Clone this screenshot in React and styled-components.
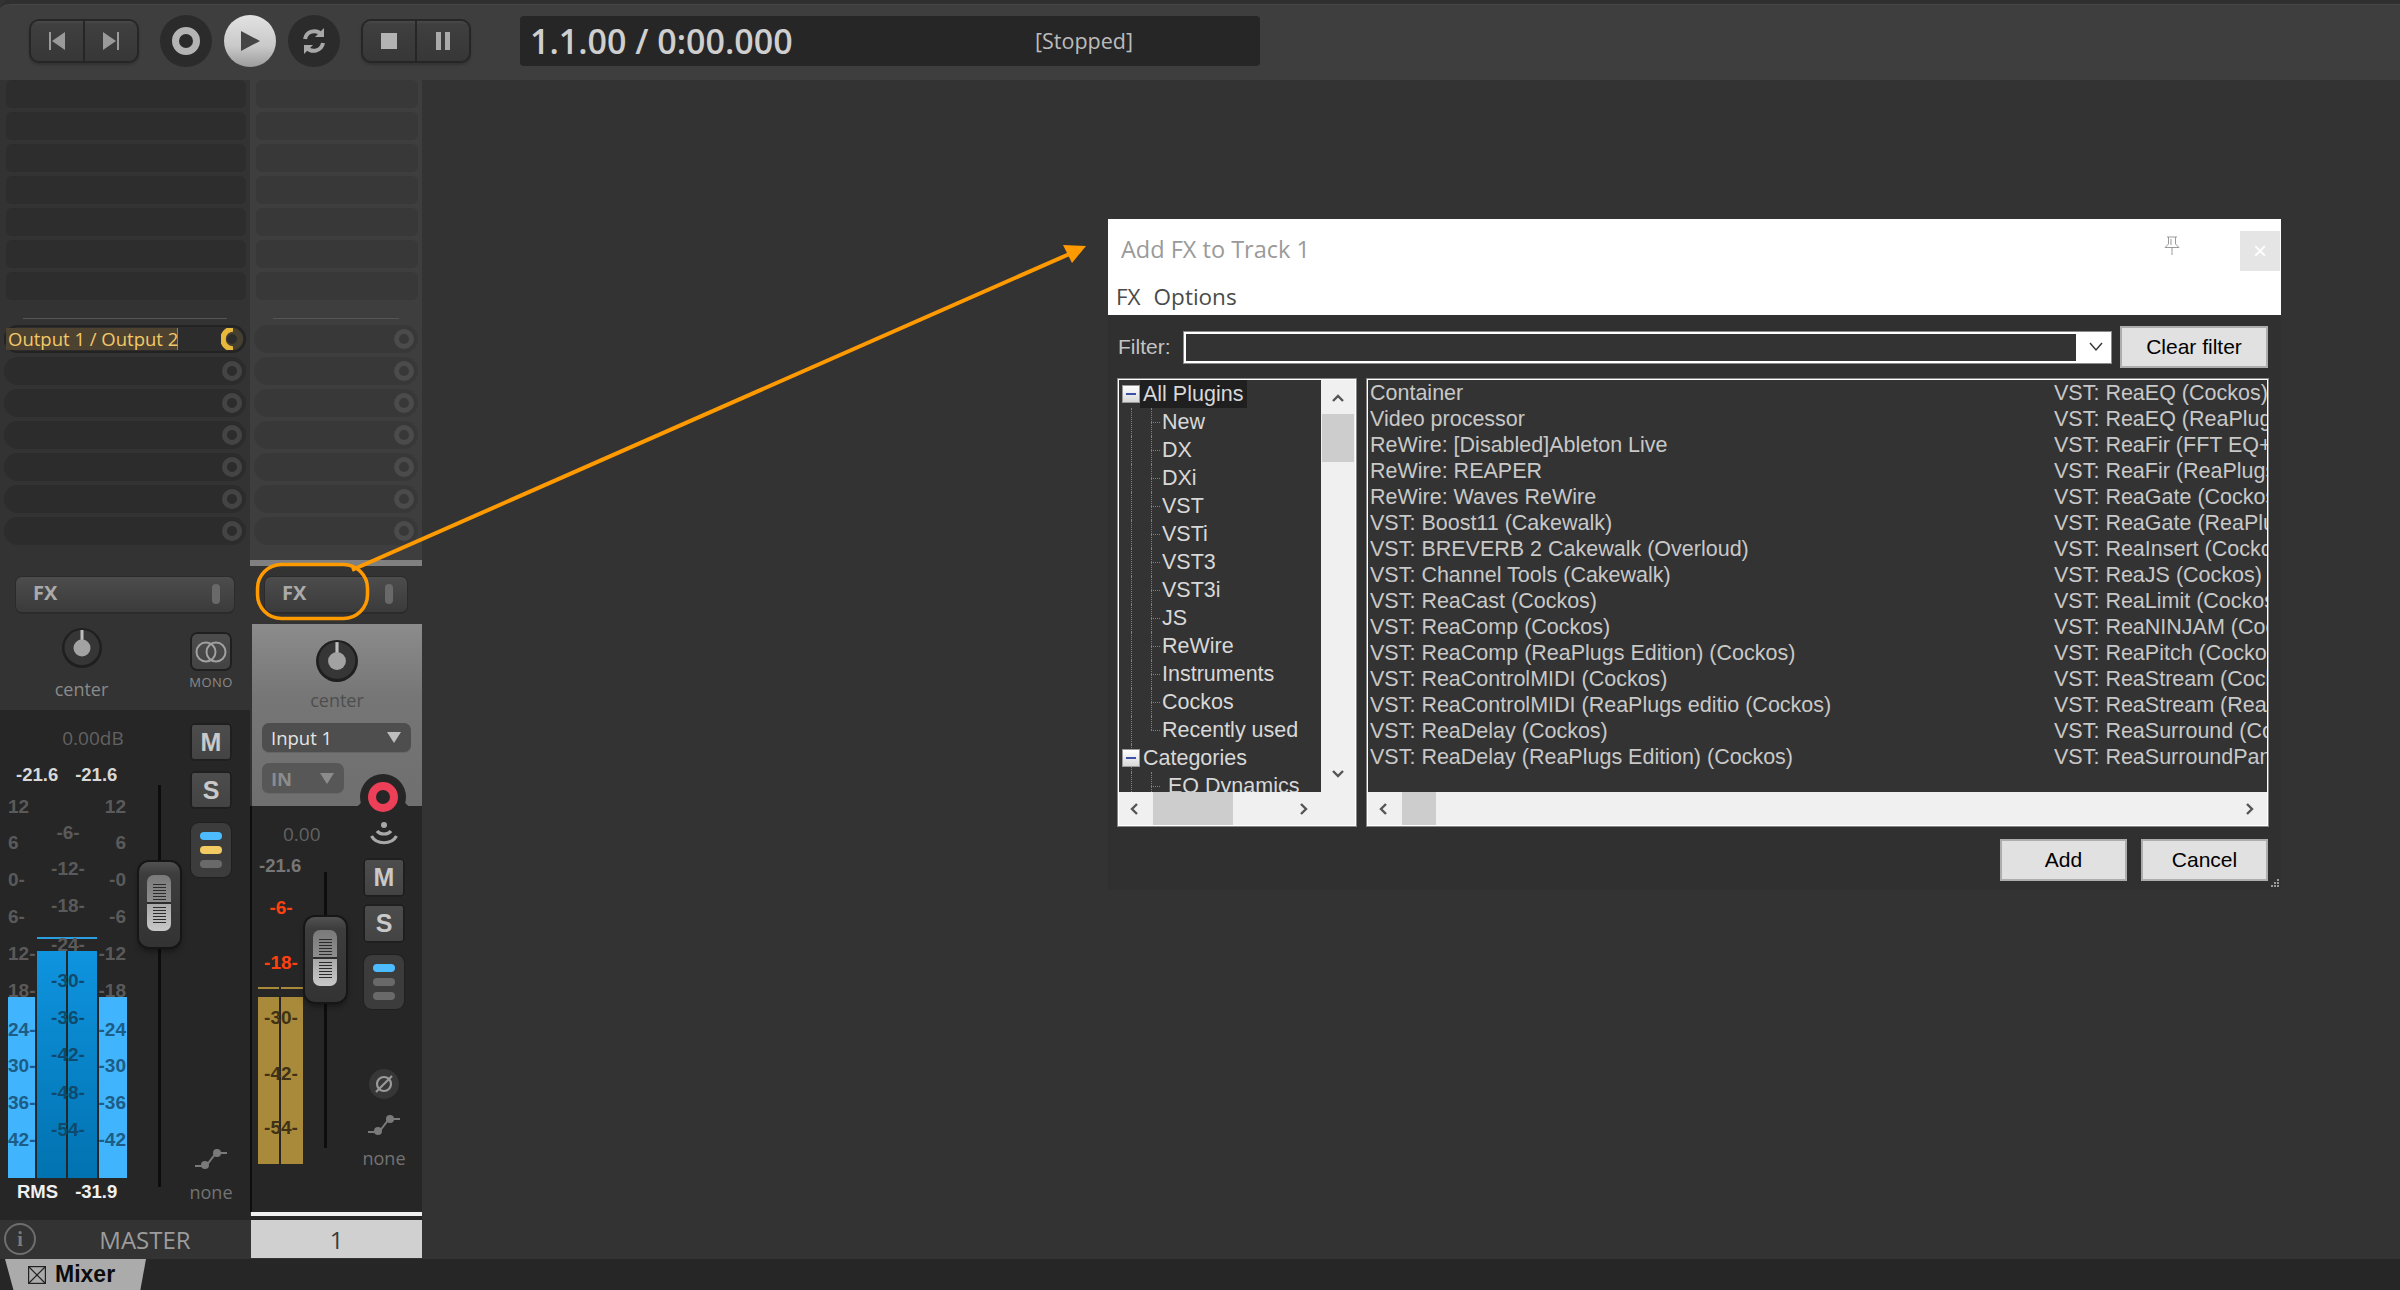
import React from "react";
import styled, { createGlobalStyle } from "styled-components";

const GlobalStyle = createGlobalStyle`
  html, body { margin: 0; padding: 0; background: #333; }
  * { box-sizing: border-box; }
`;

const UI = `"Open Sans", "Noto Sans", sans-serif`;
const ARIAL = `"Liberation Sans", Arial, sans-serif`;

const Page = styled.div`
  position: relative; width: 2400px; height: 1290px; overflow: hidden;
  display: flex; flex-direction: column; background: #333; font-family: ${UI};
`;

/* ---------- Transport ---------- */
const TopBar = styled.header`
  height: 80px; flex: none; display: flex; align-items: center; padding: 0 0 2px 29px;
  background: #3e3e3e; border-top: 4px solid #2f2f2f; border-top-left-radius: 10px;
  box-shadow: inset 0 1px 0 #464646;
`;
const BtnGroup = styled.div`
  display: flex; width: 110px; height: 44px; border-radius: 10px; background: #262626; padding: 2px; gap: 2px;
  box-shadow: 0 2px 2px #333;
`;
const GroupBtn = styled.div`
  flex: 1; display: flex; align-items: center; justify-content: center;
  background: linear-gradient(#4a4a4a 0, #3f3f3f 8%, #373737 100%);
  border-radius: ${(p) => (p.$side === "l" ? "8px 0 0 8px" : "0 8px 8px 0")};
`;
const RoundBtn = styled.div`
  width: 52px; height: 52px; border-radius: 50%; flex: none; display: flex; align-items: center; justify-content: center;
  margin-left: ${(p) => p.$ml || 12}px;
  background: ${(p) => (p.$on ? "linear-gradient(#e2e2e2, #c9c9c9 60%, #9c9c9c)" : "#2b2b2b")};
`;
const Spacer = styled.div`width: ${(p) => p.$w}px; flex: none;`;
const TimeBox = styled.div`
  width: 740px; height: 50px; margin-left: 49px; margin-top: -1px; background: #262626; border-radius: 4px;
  display: flex; align-items: center; padding-left: 10px; color: #cfcfcf;
`;
const TimeText = styled.span`font-size: 34px; font-weight: 600; width: 505px; letter-spacing: 0; white-space: nowrap;`;
const StatusText = styled.span`font-size: 21.5px; color: #bcbcbc; white-space: nowrap;`;

/* ---------- Workspace ---------- */
const Workspace = styled.div`flex: 1; display: flex; min-height: 0;`;
const Mixer = styled.div`width: 422px; flex: none; display: flex;`;
const Strip = styled.section`
  width: ${(p) => p.$w}px; flex: none; display: flex; flex-direction: column; background: #333;
`;
const SlotsArea = styled.div`
  height: 480px; flex: none; display: flex; flex-direction: column; background: ${(p) => (p.$track ? "#3e3e3e" : "#333")};
  padding: 0 4px;
`;
const Slot = styled.div`
  height: 28px; flex: none; margin: 0 0 4px 2px; border-radius: 6px;
  background: ${(p) => (p.$track ? "#383838" : "#2d2d2d")};
`;
const Sep = styled.div`height: 1px; flex: none; margin: 14px ${(p) => p.$m}px 6px; background: #555;`;
const Send = styled.div`
  height: 28px; flex: none; margin-bottom: 4px; border-radius: 14px; position: relative; display: flex; align-items: center;
  background: ${(p) => (p.$track ? "#383838" : "#2c2c2c")};
  ${(p) => p.$active && "box-shadow: 0 0 0 2px #232323 inset;"}
`;
const SendKnob = styled.div`
  position: absolute; right: 4px; top: 4px; width: 20px; height: 20px; border-radius: 50%;
  border: 5px solid ${(p) => (p.$track ? "#4b4b4b" : "#444")};
  background: ${(p) => (p.$track ? "#383838" : "#2c2c2c")};
`;
const SendFill = styled.div`
  width: 172px; height: 22px; margin-left: 2px; background: #4d4230; border-right: 1px solid #8a8270;
  font-size: 18.5px; line-height: 22px; color: #f2c968; padding-left: 2px; white-space: nowrap; overflow: visible;
`;
const ActiveKnob = styled.svg`position: absolute; right: 3px; top: 3px;`;
const GreyBar = styled.div`height: 6px; flex: none; background: ${(p) => (p.$on ? "#808080" : "transparent")};`;
const FxRow = styled.div`height: 58px; flex: none; display: flex; align-items: center; padding: ${(p) => p.$pad}; `;
const FxBtn = styled.div`
  flex: 1; height: 35px; border-radius: 6px; display: flex; align-items: center; justify-content: space-between;
  padding: 0 14px 3px 17px; margin-top: -2px; font-size: 20px; font-weight: 700; color: #aaa;
  background: linear-gradient(#4c4c4c, #3b3b3b); box-shadow: 0 0 0 1px #2b2b2b, 0 2px 0 #2b2b2b;
`;
const FxPill = styled.div`width: 8px; height: 20px; border-radius: 4px; background: #696969; margin-top: 3px;`;

const KnobWrap = styled.div`
  width: ${(p) => p.$s}px; height: ${(p) => p.$s}px; flex: none;
`;
const Caption = styled.div`
  font-size: 18px; line-height: 20px; color: ${(p) => p.$c || "#8a8a8a"}; text-align: center; white-space: nowrap;
  margin-top: ${(p) => p.$mt || 0}px;
`;
const MasterPanel = styled.div`
  height: 86px; flex: none; display: grid; grid-template-columns: 163px 87px; 
`;
const PanCol = styled.div`display: flex; flex-direction: column; align-items: center; padding-top: 4px; gap: 11px;`;
const MonoCol = styled.div`display: flex; flex-direction: column; align-items: center; padding: 8px 0 0 9px; gap: 4px;`;
const SquareBtn = styled.div`
  width: 42px; height: ${(p) => p.$h || 38}px; flex: none; border-radius: ${(p) => p.$r || 4}px; display: flex; align-items: center; justify-content: center;
  margin-top: ${(p) => p.$mt || 0}px;
  background: linear-gradient(#4d4d4d, #434343); box-shadow: inset 0 0 0 2px #1f1f1f;
  font-family: ${ARIAL}; font-weight: 700; font-size: 25px; color: #c9c9c9;
`;
const MonoLabel = styled.div`font-size: 13px; line-height: 15px; color: #8a8a8a; letter-spacing: 0.4px;`;

const TrackPanel = styled.div`
  height: 182px; flex: none; margin-left: 2px; background: linear-gradient(#8c8c8c 0, #767676 40%, #6f6f6f 100%);
  display: flex; flex-direction: column; align-items: center; padding: 16px 10px 0; position: relative;
`;
const Select = styled.div`
  width: ${(p) => p.$w}px; height: ${(p) => p.$h}px; flex: none; align-self: flex-start; border-radius: 7px; background: ${(p) => p.$bg};
  display: flex; align-items: center; justify-content: space-between; padding: 0 10px 0 9px;
  margin-top: ${(p) => p.$mt}px; font-size: 18.5px; color: ${(p) => p.$c}; font-weight: ${(p) => p.$fw || 400};
  box-shadow: 0 1px 0 #666;
`;
const Tri = styled.span`
  width: 0; height: 0; border-left: 7px solid transparent; border-right: 7px solid transparent;
  border-top: 11px solid ${(p) => p.$c};
`;
const RecHump = styled.div`
  position: absolute; left: 108px; top: 150px; width: 46px; height: 46px; border-radius: 50%; background: #262626; z-index: 2;
  display: flex; align-items: center; justify-content: center;
  &::before, &::after {
    content: ""; position: absolute; top: 25px; width: 8px; height: 8px;
  }
  &::before { left: -6px; background: radial-gradient(circle at 0 0, transparent 7.5px, #262626 8px); }
  &::after { right: -6px; background: radial-gradient(circle at 100% 0, transparent 7.5px, #262626 8px); }
`;
const RecRing = styled.div`
  width: 30px; height: 30px; border-radius: 50%; border: 8px solid #ee3f58; background: #262626;
`;

const Lower = styled.div`
  height: ${(p) => p.$h}px; flex: none; background: #262626; position: relative; display: flex;
  ${(p) => p.$track && "border-left: 2px solid #0d0d0d;"}
`;
const MeterCol = styled.div`
  width: ${(p) => p.$w}px; flex: none; margin-left: ${(p) => p.$ml}px; display: flex; flex-direction: column;
`;
const DbText = styled.div`
  height: ${(p) => p.$h}px; flex: none; font-size: ${(p) => p.$fs || 19}px; color: #626262; text-align: ${(p) => p.$a || "center"};
  line-height: ${(p) => p.$h}px; white-space: nowrap; padding-left: ${(p) => p.$pl || 0}px;
`;
const ReadRow = styled.div`
  display: flex; flex: none; height: ${(p) => p.$h}px; align-items: center; gap: 17px; padding-left: ${(p) => p.$pl}px;
  font-family: ${ARIAL}; font-weight: 700; font-size: 18.5px; color: ${(p) => p.$c}; white-space: nowrap;
`;
const MeterBox = styled.div`
  position: relative; height: ${(p) => p.$h}px; flex: none; display: flex; align-items: flex-end; gap: 2px;
`;
const Bar = styled.div`
  width: ${(p) => p.$w}px; height: ${(p) => p.$h}px; flex: none; background: ${(p) => p.$bg};
`;
const Peak = styled.div`
  position: absolute; left: ${(p) => p.$l}px; width: ${(p) => p.$w}px; top: ${(p) => p.$t}px; height: 2px; background: ${(p) => p.$c};
`;
const Scale = styled.span`
  position: absolute; top: ${(p) => p.$y}px; line-height: 20px; font-family: ${ARIAL}; font-weight: 700;
  font-size: 19px; color: ${(p) => p.$c}; white-space: nowrap;
  ${(p) => (p.$r !== undefined ? `right: ${p.$r}px;` : "")}
  ${(p) => (p.$l !== undefined ? `left: ${p.$l}px;` : "")}
  ${(p) => (p.$cx !== undefined ? `left: ${p.$cx}px; transform: translateX(-50%);` : "")}
`;
const FaderCol = styled.div`
  width: 40px; flex: none; margin-left: ${(p) => p.$ml}px; margin-top: ${(p) => p.$mt}px; height: ${(p) => p.$h}px; position: relative;
  display: flex; justify-content: center;
`;
const FaderLine = styled.div`width: 3px; height: 100%; background: #0d0d0d;`;
const FaderCap = styled.div`
  position: absolute; left: 0; top: ${(p) => p.$t}px; width: 41px; height: 85px; border-radius: 10px; padding: 13px 8px;
  background: linear-gradient(#515151, #3d3d3d 14%, #333 100%); box-shadow: 0 0 0 2px #161616, 0 4px 6px rgba(0,0,0,.45);
`;
const FaderGrip = styled.div`
  width: 24px; height: 56px; border-radius: 7px; background: linear-gradient(#7a7a7a 0, #8d8d8d 48%, #2d2d2d 48%, #2d2d2d 51%, #a9a9a9 51%, #c8c8c8 100%);
  display: flex; flex-direction: column; justify-content: center; gap: 2px; align-items: center;
`;
const Hatch = styled.div`width: 13px; height: 1px; background: #2b2b2b; margin-top: ${(p) => p.$mt || 0}px;`;
const BtnCol = styled.div`
  width: 42px; flex: none; margin-left: ${(p) => p.$ml}px; padding-top: ${(p) => p.$pt}px; padding-bottom: ${(p) => p.$pb}px; display: flex; flex-direction: column; align-items: center; gap: 10px;
`;
const LedGroup = styled.div`
  width: 40px; height: 54px; flex: none; border-radius: 8px; background: #3c3c3c; box-shadow: 0 0 0 1px #1f1f1f;
  display: flex; flex-direction: column; align-items: center; justify-content: center; gap: 6px; margin-top: ${(p) => p.$mt}px;
`;
const Led = styled.div`width: 22px; height: 8px; border-radius: 4px; background: ${(p) => p.$c};`;
const PushDown = styled.div`margin-top: auto; margin-bottom: -3px;`;
const PhaseBtn = styled.div`
  width: 30px; height: 30px; border-radius: 50%; background: #373737; display: flex; align-items: center; justify-content: center; margin-top: 50px;
`;
const NameBar = styled.div`
  height: 38px; flex: none; position: relative; display: flex; align-items: center; justify-content: center;
  padding-left: ${(p) => (p.$sel ? 0 : 40)}px;
  font-size: 24px; font-weight: 400; background: ${(p) => (p.$sel ? "#d0d0d0" : "#333")};
  color: ${(p) => (p.$sel ? "#3a3a3a" : "#9c9c9c")}; ${(p) => p.$sel && "margin-left: 1px;"}
`;
const WhiteLine = styled.div`height: 4px; flex: none; background: #f0f0f0; margin-left: 1px;`;
const DarkGap = styled.div`height: ${(p) => p.$h}px; flex: none; background: #262626;`;
const InfoIcon = styled.div`
  position: absolute; left: 4px; top: 3px; width: 32px; height: 32px; border-radius: 50%; border: 2px solid #6e6e6e;
  display: flex; align-items: center; justify-content: center; font-family: "Liberation Serif", serif; font-weight: 700; font-size: 20px; color: #7c7c7c;
`;

/* ---------- Canvas and FX dialog ---------- */
const Canvas = styled.div`flex: 1; padding: 139px 0 0 686px;`;
const Dialog = styled.div`
  width: 1173px; height: 671px; background: #303030; position: relative; display: flex; flex-direction: column;
`;
const DialogHead = styled.div`height: 96px; flex: none; background: #fff; position: relative;`;
const TitleRow = styled.div`
  height: 59px; display: flex; align-items: center; padding-left: 13px; font-size: 23.5px; color: #9a9a9a; white-space: nowrap;
`;
const MenuRow = styled.div`
  display: flex; gap: 13px; padding-left: 8px; font-size: 22.5px; color: #4a4a4a; line-height: 37px;
`;
const PinBox = styled.div`position: absolute; left: 1056px; top: 17px; line-height: 0;`;
const CloseBox = styled.div`
  position: absolute; right: 1px; top: 12px; width: 40px; height: 40px; background: #e5e5e5; color: #fff; font-size: 24px;
  display: flex; align-items: center; justify-content: center; font-family: ${ARIAL};
`;
const FilterRow = styled.div`
  display: flex; align-items: center; height: 42px; margin-top: 11px; padding-left: 10px; font-family: ${ARIAL}; font-size: 21px; color: #c4c4c4;
`;
const FilterLabel = styled.span`width: 65px; flex: none;`;
const FilterInput = styled.div`
  width: 929px; height: 33px; flex: none; background: #fff; border: 1px solid #8a8a8a; padding: 2px 0 2px 2px; display: flex;
`;
const FilterInner = styled.div`flex: 1; background: #333;`;
const Chevron = styled.div`width: 35px; padding-left: 4px; display: flex; align-items: center; justify-content: center;`;
const WinBtn = styled.div`
  height: 42px; width: ${(p) => p.$w}px; flex: none; margin-left: ${(p) => p.$ml}px; background: #e1e1e1; border: 2px solid #adadad;
  display: flex; align-items: center; justify-content: center; color: #000; font-family: ${ARIAL}; font-size: 21px;
`;
const Panels = styled.div`display: flex; margin: 10px 0 0 9px; height: 449px; gap: 9px;`;
const PanelFrame = styled.div`
  width: ${(p) => p.$w}px; height: 449px; flex: none; border: 1px solid #858585; background: #fff; padding: 1px;
  display: grid; grid-template-rows: 412px 33px; grid-template-columns: ${(p) => p.$cols}; font-family: ${ARIAL}; font-size: 21.5px; color: #c8c8c8;
`;
const TreeView = styled.div`background: #333; overflow: hidden; position: relative;`;
const TreeRow = styled.div`
  height: 28px; line-height: 28px; white-space: nowrap; position: relative; padding-left: ${(p) => p.$pl}px;
`;
const TreeLabel = styled.span`
  display: inline-block; padding: 0 4px 0 3px; margin-left: -3px; color: #d8d8d8; background: ${(p) => (p.$sel ? "#1f1f1f" : "transparent")};
`;
const Expander = styled.span`
  position: absolute; left: 3px; top: 5px; width: 18px; height: 18px; background: linear-gradient(#fff, #d9d9d9); border: 1px solid #999;
  display: flex; align-items: center; justify-content: center;
  &::after { content: ""; width: 10px; height: 2px; background: #3c50a8; }
`;
const Dot = styled.span`
  position: absolute; top: 0; bottom: ${(p) => (p.$half ? "14px" : "0")}; left: ${(p) => p.$l}px; width: 0; border-left: 1px dotted #808080;
`;
const Stub = styled.span`position: absolute; top: 14px; left: 32px; width: 9px; height: 0; border-top: 1px dotted #808080;`;
const VScroll = styled.div`
  background: #f0f0f0; display: flex; flex-direction: column; align-items: center; justify-content: space-between;
  padding: 3px 0 33px; position: relative; grid-row: 1 / span 2; grid-column: 2;
`;
const VThumb = styled.div`position: absolute; top: 34px; left: 1px; right: 1px; height: 48px; background: #cdcdcd;`;
const ArrowBox = styled.div`height: 34px; display: flex; align-items: center; justify-content: center; line-height: 0; flex: none; width: ${(p) => p.$w || 34}px;`;
const HScroll = styled.div`background: #f0f0f0; display: flex; align-items: center;`;
const HThumb = styled.div`width: ${(p) => p.$w}px; height: 33px; background: #cdcdcd; flex: none;`;
const Grow = styled.div`flex: 1;`;
const ListView = styled.div`
  background: #333; overflow: hidden; display: grid; grid-template-columns: 684px 1fr; padding-left: 2px; align-content: start;
`;
const ListCell = styled.div`height: 26px; line-height: 26px; white-space: nowrap; overflow: hidden;`;
const ActionRow = styled.div`display: flex; justify-content: flex-end; padding-right: 13px; margin-top: 12px;`;
const Grip = styled.div`position: absolute; right: 1px; bottom: 2px; line-height: 0;`;

const Overlay = styled.svg`position: absolute; left: 0; top: 0; pointer-events: none; z-index: 5;`;

/* ---------- Tab bar ---------- */
const TabBar = styled.footer`height: 31px; flex: none; background: #262626; padding-left: 5px; display: flex;`;
const MixerTab = styled.div`
  width: 141px; height: 31px; background: #ababab; clip-path: polygon(0 0, 100% 0, 96% 100%, 6% 100%);
  display: flex; align-items: center; padding-left: 23px; gap: 9px; font-family: ${ARIAL}; font-weight: 700; font-size: 23px; color: #0c0c0c;
`;
const CloseCheck = styled.svg`flex: none;`;

/* ---------- Drawings ---------- */
const Knob = ({ size = 40 }) => (
  <KnobWrap $s={size}>
    <svg width={size} height={size} viewBox="0 0 40 40">
      <circle cx="20" cy="20" r="20" fill="#1f1f1f" />
      <circle cx="20" cy="19.5" r="17.5" fill="#363636" />
      <rect x="18.5" y="2" width="3" height="14" fill="#bdbdbd" />
      <circle cx="20" cy="20" r="8.5" fill="#a2a2a2" />
    </svg>
  </KnobWrap>
);
const Automation = () => (
  <svg width="34" height="22" viewBox="0 0 34 22">
    <path d="M1 18h11l10-13h11" fill="none" stroke="#7a7a7a" strokeWidth="2" />
    <circle cx="11" cy="17" r="4" fill="#7a7a7a" />
    <circle cx="23" cy="5" r="4" fill="#7a7a7a" />
  </svg>
);
const Fader = ({ t, ml, mt, h }) => (
  <FaderCol $ml={ml} $mt={mt} $h={h}>
    <FaderLine />
    <FaderCap $t={t}>
      <FaderGrip>
        {[0, 1, 2, 3, 4, 5, 6, 7, 8, 9, 10, 11].map((i) => <Hatch key={i} $mt={i === 6 ? 5 : 0} />)}
      </FaderGrip>
    </FaderCap>
  </FaderCol>
);
const Chev = ({ d, c = "#555" }) => {
  const paths = { u: "M2 8l5-5 5 5", dn: "M2 3l5 5 5-5", l: "M8 2L3 7l5 5", r: "M4 2l5 5-5 5" };
  return <svg width="14" height="14" viewBox="0 0 14 14"><path d={paths[d]} fill="none" stroke={c} strokeWidth="2.4" /></svg>;
};

const TREE = ["New", "DX", "DXi", "VST", "VSTi", "VST3", "VST3i", "JS", "ReWire", "Instruments", "Cockos", "Recently used"];
const LEFT = [
  "Container", "Video processor", "ReWire: [Disabled]Ableton Live", "ReWire: REAPER", "ReWire: Waves ReWire",
  "VST: Boost11 (Cakewalk)", "VST: BREVERB 2 Cakewalk (Overloud)", "VST: Channel Tools (Cakewalk)", "VST: ReaCast (Cockos)",
  "VST: ReaComp (Cockos)", "VST: ReaComp (ReaPlugs Edition) (Cockos)", "VST: ReaControlMIDI (Cockos)",
  "VST: ReaControlMIDI (ReaPlugs editio (Cockos)", "VST: ReaDelay (Cockos)", "VST: ReaDelay (ReaPlugs Edition) (Cockos)",
];
const RIGHT = [
  "VST: ReaEQ (Cockos)", "VST: ReaEQ (ReaPlugs Edition)", "VST: ReaFir (FFT EQ+Dynamics)", "VST: ReaFir (ReaPlugs Edition)",
  "VST: ReaGate (Cockos)", "VST: ReaGate (ReaPlugs Edition)", "VST: ReaInsert (Cockos)", "VST: ReaJS (Cockos)", "VST: ReaLimit (Cockos)",
  "VST: ReaNINJAM (Cockos)", "VST: ReaPitch (Cockos)", "VST: ReaStream (Cockos)", "VST: ReaStream (ReaPlugs)", "VST: ReaSurround (Cockos)", "VST: ReaSurroundPan (Cockos)",
];
const MASTER_L = [["12", 13], ["6", 49], ["0-", 86], ["6-", 123], ["12-", 160], ["18-", 197], ["24-", 236], ["30-", 272], ["36-", 309], ["42-", 346]];
const MASTER_R = [["12", 13], ["6", 49], ["-0", 86], ["-6", 123], ["-12", 160], ["-18", 197], ["-24", 236], ["-30", 272], ["-36", 309], ["-42", 346]];
const MASTER_C = [["-6-", 39], ["-12-", 75], ["-18-", 112], ["-24-", 151], ["-30-", 187], ["-36-", 224], ["-42-", 261], ["-48-", 299], ["-54-", 336]];

function SendKnobActive() {
  return (
    <ActiveKnob width="22" height="22" viewBox="0 0 22 22">
      <circle cx="11" cy="11" r="8" fill="none" stroke="#45402f" strokeWidth="6" />
      <path d="M12 1a10 10 0 0 0 0 20" fill="none" stroke="#e8b83c" strokeWidth="5.5" />
    </ActiveKnob>
  );
}

export default function App() {
  return (
    <Page>
      <GlobalStyle />
      <TopBar>
        <BtnGroup>
          <GroupBtn $side="l">
            <svg width="18" height="20" viewBox="0 0 18 20"><path d="M2 1v18" stroke="#9a9a9a" strokeWidth="2" /><path d="M17 1v18L4 10z" fill="#9a9a9a" /></svg>
          </GroupBtn>
          <GroupBtn $side="r">
            <svg width="18" height="20" viewBox="0 0 18 20"><path d="M16 1v18" stroke="#9a9a9a" strokeWidth="2" /><path d="M1 1v18l13-9z" fill="#9a9a9a" /></svg>
          </GroupBtn>
        </BtnGroup>
        <RoundBtn $ml={21}>
          <svg width="30" height="30" viewBox="0 0 30 30"><circle cx="15" cy="15" r="10.5" fill="none" stroke="#b4b4b4" strokeWidth="7" /></svg>
        </RoundBtn>
        <RoundBtn $on $ml={12}>
          <svg width="24" height="24" viewBox="0 0 24 24"><path d="M3 2v20l19-10z" fill="#454545" /></svg>
        </RoundBtn>
        <RoundBtn $ml={12}>
          <svg width="30" height="30" viewBox="0 0 30 30" fill="none" stroke="#a8a8a8" strokeWidth="4">
            <path d="M6 13a9.5 9.5 0 0 1 16-5" /><path d="M24 17a9.5 9.5 0 0 1-16 5" />
            <path d="M25 2v9h-9z" fill="#a8a8a8" stroke="none" /><path d="M5 28v-9h9z" fill="#a8a8a8" stroke="none" />
          </svg>
        </RoundBtn>
        <Spacer $w={21} />
        <BtnGroup>
          <GroupBtn $side="l"><svg width="16" height="16" viewBox="0 0 16 16"><rect width="16" height="16" fill="#b3b3b3" /></svg></GroupBtn>
          <GroupBtn $side="r"><svg width="16" height="18" viewBox="0 0 16 18"><rect x="1" width="5" height="18" fill="#a9a9a9" /><rect x="10" width="5" height="18" fill="#a9a9a9" /></svg></GroupBtn>
        </BtnGroup>
        <TimeBox>
          <TimeText>1.1.00 / 0:00.000</TimeText>
          <StatusText>[Stopped]</StatusText>
        </TimeBox>
      </TopBar>

      <Workspace>
        <Mixer>
          <Strip $w={250}>
            <SlotsArea>
              {[0, 1, 2, 3, 4, 5, 6].map((i) => <Slot key={i} />)}
              <Sep $m={19} />
              <Send $active>
                <SendFill>Output 1 / Output 2</SendFill>
                <SendKnobActive />
              </Send>
              {[0, 1, 2, 3, 4, 5].map((i) => <Send key={i}><SendKnob /></Send>)}
            </SlotsArea>
            <GreyBar />
            <FxRow $pad="0 16px"><FxBtn>FX<FxPill /></FxBtn></FxRow>
            <MasterPanel>
              <PanCol>
                <Knob />
                <Caption>center</Caption>
              </PanCol>
              <MonoCol>
                <SquareBtn $h={39} $r={7}>
                  <svg width="32" height="24" viewBox="0 0 32 24" fill="none" stroke="#a0a0a0" strokeWidth="2"><circle cx="11" cy="12" r="9.5" /><circle cx="21" cy="12" r="9.5" /></svg>
                </SquareBtn>
                <MonoLabel>MONO</MonoLabel>
              </MonoCol>
            </MasterPanel>
            <Lower $h={510}>
              <MeterCol $w={119} $ml={8}>
                <DbText $h={56} $pl={51}>0.00dB</DbText>
                <ReadRow $h={18} $pl={8} $c="#d8d8d8"><span>-21.6</span><span>-21.6</span></ReadRow>
                <MeterBox $h={394}>
                  <Bar $w={27} $h={181} $bg="#40b4fc" />
                  <Bar $w={29} $h={227} $bg="linear-gradient(#0f94df, #0172b0)" />
                  <Bar $w={29} $h={227} $bg="linear-gradient(#0f94df, #0172b0)" />
                  <Bar $w={28} $h={181} $bg="#40b4fc" />
                  <Peak $l={29} $w={60} $t={153} $c="#2a9ee0" />
                  {MASTER_L.map(([t, y]) => <Scale key={"l" + y} $l={0} $y={y} $c={y > 220 ? "#1c5c85" : "#5a5a5a"}>{t}</Scale>)}
                  {MASTER_R.map(([t, y]) => <Scale key={"r" + y} $r={1} $y={y} $c={y > 220 ? "#1c5c85" : "#5a5a5a"}>{t}</Scale>)}
                  {MASTER_C.map(([t, y]) => <Scale key={"c" + y} $cx={60} $y={y} $c={y > 160 ? "#0f4a6e" : "#5a5a5a"}>{t}</Scale>)}
                </MeterBox>
                <ReadRow $h={28} $pl={9} $c="#f0f0f0"><span>RMS</span><span>-31.9</span></ReadRow>
              </MeterCol>
              <Fader t={77} ml={12} mt={75} h={402} />
              <BtnCol $ml={11} $pt={13} $pb={18}>
                <SquareBtn>M</SquareBtn>
                <SquareBtn>S</SquareBtn>
                <LedGroup $mt={4}>
                  <Led $c="#4cbcff" /><Led $c="#f3cb63" /><Led $c="#696969" />
                </LedGroup>
                <PushDown><Automation /></PushDown>
                <Caption $c="#737373">none</Caption>
              </BtnCol>
            </Lower>
            <NameBar>
              <InfoIcon>i</InfoIcon>
              MASTER
            </NameBar>
          </Strip>

          <Strip $w={172}>
            <SlotsArea $track>
              {[0, 1, 2, 3, 4, 5, 6].map((i) => <Slot key={i} $track />)}
              <Sep $m={19} />
              {[0, 1, 2, 3, 4, 5, 6].map((i) => <Send key={i} $track><SendKnob $track /></Send>)}
            </SlotsArea>
            <GreyBar $on />
            <FxRow $pad="0 15px"><FxBtn>FX<FxPill /></FxBtn></FxRow>
            <TrackPanel>
              <Knob size={42} />
              <Caption $c="#4e4e4e" $mt={8}>center</Caption>
              <Select $w={149} $h={29} $mt={13} $bg="#4e4e4e" $c="#e4e4e4">Input 1<Tri $c="#bdbdbd" /></Select>
              <Select $w={82} $h={30} $mt={11} $bg="#575757" $c="#8c8c8c" $fw={700}>IN<Tri $c="#8c8c8c" /></Select>
              <RecHump><RecRing /></RecHump>
            </TrackPanel>
            <Lower $track $h={406}>
              <MeterCol $w={45} $ml={6}>
                <DbText $h={56} $pl={25} $a="left">0.00</DbText>
                <ReadRow $h={8} $pl={1} $c="#777"><span>-21.6</span></ReadRow>
                <MeterBox $h={294}>
                  <Bar $w={21} $h={167} $bg="#a88a3a" />
                  <Bar $w={22} $h={167} $bg="#a88a3a" />
                  <Peak $l={0} $w={21} $t={117} $c="#a88a3a" />
                  <Peak $l={23} $w={22} $t={117} $c="#a88a3a" />
                  <Scale $cx={23} $y={28} $c="#ff4010">-6-</Scale>
                  <Scale $cx={23} $y={83} $c="#ff4010">-18-</Scale>
                  <Scale $cx={23} $y={138} $c="#3f3216">-30-</Scale>
                  <Scale $cx={23} $y={194} $c="#3f3216">-42-</Scale>
                  <Scale $cx={23} $y={248} $c="#3f3216">-54-</Scale>
                </MeterBox>
              </MeterCol>
              <Fader t={45} ml={2} mt={66} h={276} />
              <BtnCol $ml={18} $pt={15} $pb={44}>
                <svg width="28" height="24" viewBox="0 0 28 24" fill="none" stroke="#a8a8a8" strokeWidth="3.2">
                  <circle cx="14" cy="4" r="3" fill="#a8a8a8" stroke="none" />
                  <path d="M7 10c3 4 11 4 14 0" /><path d="M1.5 15c5 9 20 9 25 0" />
                </svg>
                <SquareBtn $h={39} $mt={3}>M</SquareBtn>
                <SquareBtn $h={39} $mt={-3}>S</SquareBtn>
                <LedGroup $mt={2}>
                  <Led $c="#4cbcff" /><Led $c="#696969" /><Led $c="#696969" />
                </LedGroup>
                <PhaseBtn>
                  <svg width="20" height="20" viewBox="0 0 20 20" fill="none" stroke="#9a9a9a" strokeWidth="2.2"><circle cx="10" cy="10" r="7" /><path d="M2 18L18 2" /></svg>
                </PhaseBtn>
                <PushDown><Automation /></PushDown>
                <Caption $c="#737373">none</Caption>
              </BtnCol>
            </Lower>
            <WhiteLine />
            <DarkGap $h={4} />
            <NameBar $sel>1</NameBar>
          </Strip>
        </Mixer>

        <Canvas>
          <Dialog>
            <DialogHead>
              <TitleRow>Add FX to Track 1</TitleRow>
              <MenuRow><span>FX</span><span>Options</span></MenuRow>
              <PinBox>
                <svg width="16" height="20" viewBox="0 0 16 20" fill="none" stroke="#9a9a9a" strokeWidth="1"><path d="M3 1h10M4.5 1v7L1 11.5h14L11.5 8V1M7 3v6M8 11.5V19" /></svg>
              </PinBox>
              <CloseBox>×</CloseBox>
            </DialogHead>
            <FilterRow>
              <FilterLabel>Filter:</FilterLabel>
              <FilterInput>
                <FilterInner />
                <Chevron>
                  <svg width="16" height="10" viewBox="0 0 16 10" fill="none" stroke="#333" strokeWidth="1.4"><path d="M2 1l6 7 6-7" /></svg>
                </Chevron>
              </FilterInput>
              <WinBtn $w={148} $ml={8}>Clear filter</WinBtn>
            </FilterRow>
            <Panels>
              <PanelFrame $w={240} $cols="1fr 34px">
                <TreeView>
                  <TreeRow $pl={24}><Expander /><TreeLabel $sel>All Plugins</TreeLabel></TreeRow>
                  {TREE.map((t, i) => (
                    <TreeRow key={t} $pl={43}>
                      <Dot $l={12} />
                      <Dot $l={32} $half={i === TREE.length - 1} />
                      <Stub />
                      <TreeLabel>{t}</TreeLabel>
                    </TreeRow>
                  ))}
                  <TreeRow $pl={24}><Dot $l={12} /><Expander /><TreeLabel>Categories</TreeLabel></TreeRow>
                  <TreeRow $pl={49}><Dot $l={12} /><Dot $l={32} /><Stub /><TreeLabel>EQ Dynamics</TreeLabel></TreeRow>
                </TreeView>
                <VScroll>
                  <ArrowBox><Chev d="u" /></ArrowBox>
                  <VThumb />
                  <ArrowBox><Chev d="dn" /></ArrowBox>
                </VScroll>
                <HScroll>
                  <ArrowBox><Chev d="l" /></ArrowBox>
                  <HThumb $w={80} />
                  <Grow />
                  <ArrowBox><Chev d="r" /></ArrowBox>
                </HScroll>
              </PanelFrame>
              <PanelFrame $w={903} $cols="1fr">
                <ListView>
                  {LEFT.map((t, i) => (
                    <React.Fragment key={t}>
                      <ListCell>{t}</ListCell>
                      <ListCell>{RIGHT[i]}</ListCell>
                    </React.Fragment>
                  ))}
                </ListView>
                <HScroll>
                  <ArrowBox><Chev d="l" /></ArrowBox>
                  <HThumb $w={34} />
                  <Grow />
                  <ArrowBox><Chev d="r" /></ArrowBox>
                </HScroll>
              </PanelFrame>
            </Panels>
            <ActionRow>
              <WinBtn $w={127} $ml={0}>Add</WinBtn>
              <WinBtn $w={127} $ml={14}>Cancel</WinBtn>
            </ActionRow>
            <Grip>
              <svg width="9" height="9" viewBox="0 0 9 9" fill="#9a9a9a"><rect x="6" y="0" width="2" height="2" /><rect x="3" y="3" width="2" height="2" /><rect x="6" y="3" width="2" height="2" /><rect x="0" y="6" width="2" height="2" /><rect x="3" y="6" width="2" height="2" /><rect x="6" y="6" width="2" height="2" /></svg>
            </Grip>
          </Dialog>
        </Canvas>
      </Workspace>

      <TabBar>
        <MixerTab>
          <CloseCheck width="18" height="18" viewBox="0 0 18 18" fill="none" stroke="#222" strokeWidth="1.2"><rect x="0.6" y="0.6" width="16.8" height="16.8" /><path d="M1 1l16 16M17 1L1 17" /></CloseCheck>
          Mixer
        </MixerTab>
      </TabBar>

      <Overlay width="2400" height="1290" viewBox="0 0 2400 1290" fill="none">
        <rect x="257.5" y="564.5" width="110" height="54" rx="24" stroke="#ff9a00" strokeWidth="3.5" />
        <path d="M352 570L1074 252" stroke="#ff9a00" strokeWidth="4" />
        <path d="M1086 246L1063 245L1072 263Z" fill="#ff9a00" />
      </Overlay>
    </Page>
  );
}
